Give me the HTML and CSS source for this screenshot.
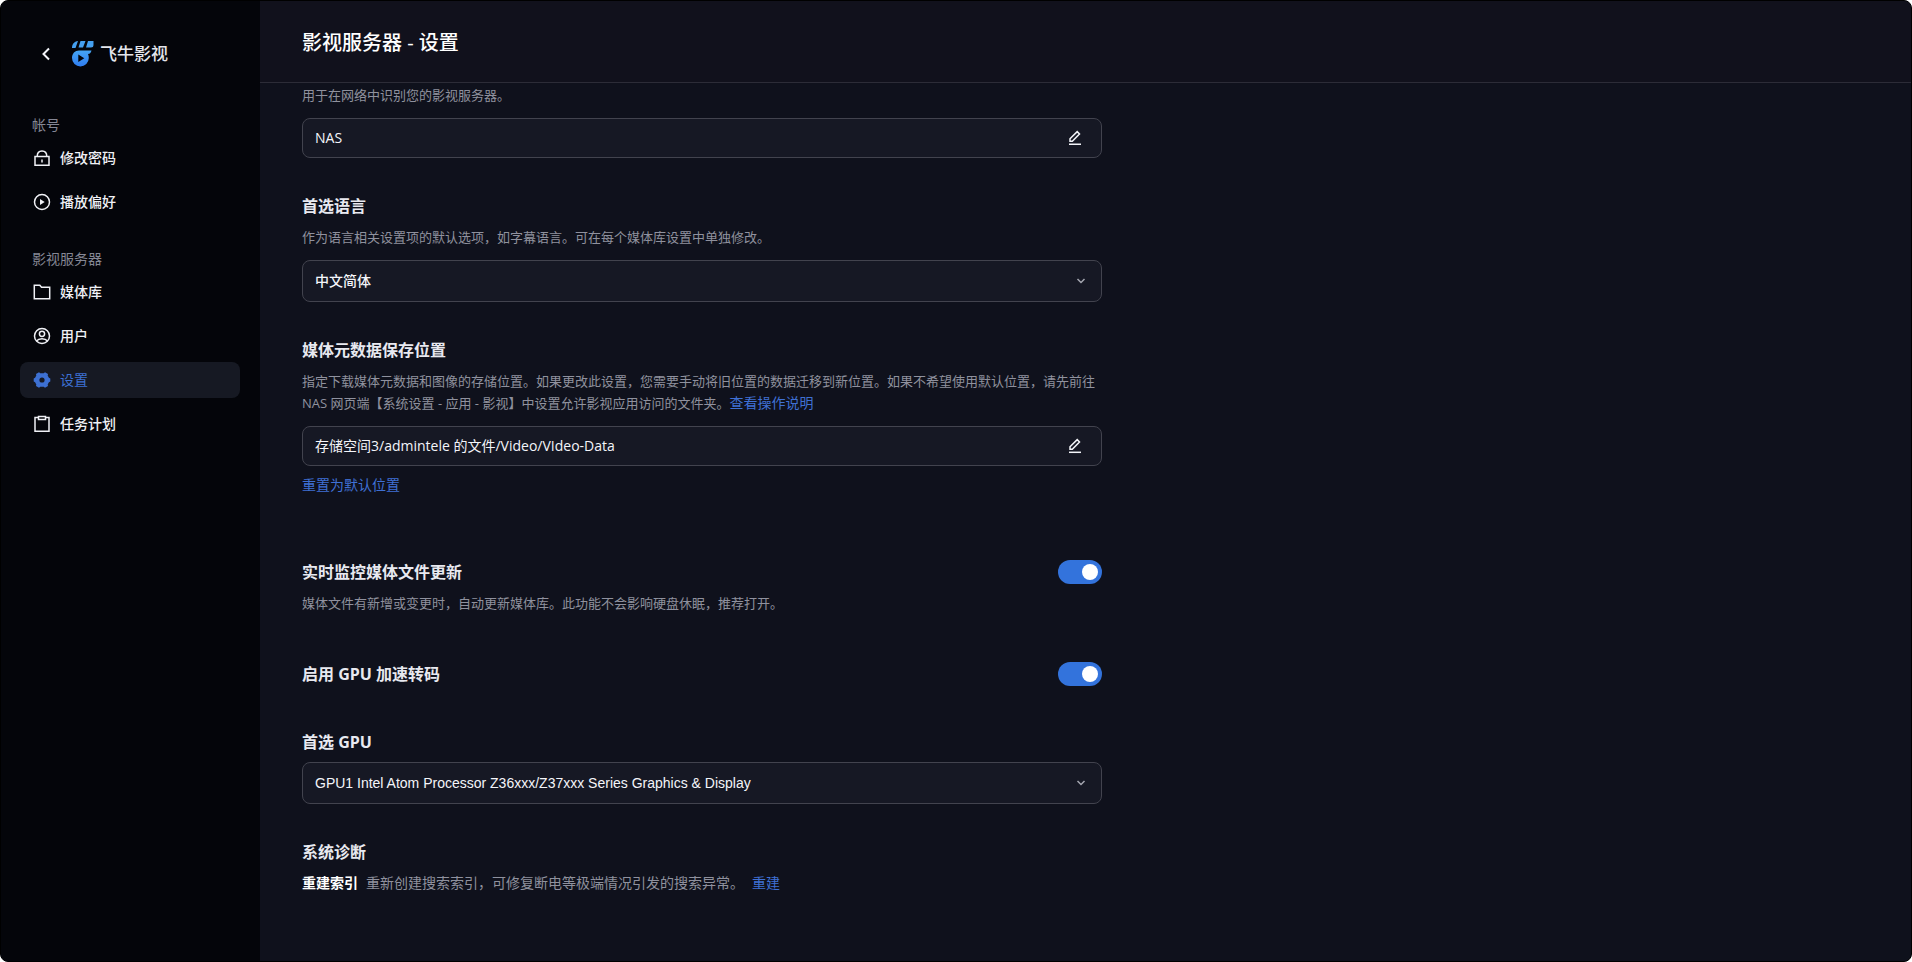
FILE: index.html
```html
<!DOCTYPE html>
<html lang="zh-CN">
<head>
<meta charset="utf-8">
<title>影视服务器 - 设置</title>
<link rel="stylesheet" href="styles.css">
</head>
<body>
<div class="window">
  <aside class="sidebar">
    <div class="brand">
      <button class="back" type="button" aria-label="返回">
        <svg width="20" height="20" viewBox="0 0 20 20" fill="none" stroke="currentColor" stroke-width="2"><path d="M13 4.500 7.500 10l5.500 5.500"/></svg>
      </button>
      <svg class="logo" width="24" height="28" viewBox="0 0 24 28" aria-hidden="true">
        <defs><linearGradient id="brandBlue" x1="0" y1="0" x2="0" y2="1"><stop offset="0" stop-color="#45a5f5"/><stop offset="1" stop-color="#2f7df0"/></linearGradient></defs>
        <path fill="#45a0f0" d="M1 8c0-4 2-6.500 6-7L4.500 8zM9.500 1h5L12 7.500H7.500zM17 1h5.500v4c0 1.700-1 2.500-2.500 2.500h-5z"/>
        <path fill="url(#brandBlue)" fill-rule="evenodd" d="M8 10.500h12.500c-.4 2-1.500 3.300-3.500 3.600.5 1.200.8 2.400.8 3.900A8.400 8.400 0 1 1 1 18c0-4.500 3-7.500 7-7.500zM7.300 14.500v7.500l6-3.800z"/>
      </svg>
      <span class="brand-name">飞牛影视</span>
    </div>
    <nav class="nav">
      <section class="nav-group">
        <h2 class="nav-label">帐号</h2>
        <a class="nav-item" href="#password">
          <svg class="icon" viewBox="0 0 20 20"><path d="M3 8.500h14v8.700H3zM5.200 8.500C5.200 5 7 2.900 10 2.900s4.800 2.100 4.800 5.600M10 11.500v3"/></svg>修改密码</a>
        <a class="nav-item" href="#playback">
          <svg class="icon" viewBox="0 0 20 20"><circle cx="10" cy="10" r="7.500"/><path class="solid" d="M8 7v6l4.700-3z"/></svg>播放偏好</a>
      </section>
      <section class="nav-group">
        <h2 class="nav-label">影视服务器</h2>
        <a class="nav-item" href="#library">
          <svg class="icon" viewBox="0 0 20 20"><path d="M2.300 3.300h5.500l1.700 2h8.200v11.400H2.300z"/></svg>媒体库</a>
        <a class="nav-item" href="#users">
          <svg class="icon" viewBox="0 0 20 20"><circle cx="10" cy="10" r="7.500"/><circle cx="10" cy="7.800" r="2.600"/><path d="M4.500 15c1.200-1.600 3-2.300 5.500-2.300s4.300.7 5.500 2.300"/></svg>用户</a>
        <a class="nav-item active" href="#settings" aria-current="page">
          <svg class="icon" viewBox="0 0 20 20"><path class="solid" fill-rule="evenodd" d="M7 2.200l1.300 1.100h3.400L13 2.200l3 1.700-.3 1.700 1.200 2.200 1.400.7v3l-1.400.7-1.200 2.200.3 1.700-3 1.700-1.300-1.100H8.300L7 17.800l-3-1.700.3-1.700-1.200-2.200-1.400-.7v-3l1.400-.7 1.200-2.200L4 3.900zM10 7.400a2.600 2.600 0 1 0 0 5.200 2.600 2.600 0 0 0 0-5.200z"/></svg>设置</a>
        <a class="nav-item" href="#tasks">
          <svg class="icon" viewBox="0 0 20 20"><path d="M6.500 3.500H3v13.700h14V3.500h-3.500M6.500 2.500h7v3h-7z"/></svg>任务计划</a>
      </section>
    </nav>
  </aside>

  <main class="main">
    <header class="header"><h1 class="title">影视服务器 - 设置</h1></header>
    <form class="settings">
      <section class="setting">
        <label class="desc" for="name">用于在网络中识别您的影视服务器。</label>
        <div class="field">
          <input class="field-input" id="name" type="text" value="NAS">
          <button class="edit" type="button" aria-label="编辑名称">
            <svg width="16" height="16" viewBox="0 0 16 16" fill="none" stroke="currentColor" stroke-width="1.500"><path d="M3 11.300V8.800l7.200-7.200 2.300 2.300-7.200 7.400z"/><path d="M2 14.300h12"/></svg>
          </button>
        </div>
      </section>

      <section class="setting">
        <label class="heading" for="language">首选语言</label>
        <p class="desc">作为语言相关设置项的默认选项，如字幕语言。可在每个媒体库设置中单独修改。</p>
        <div class="picker">
          <select class="picker-select" id="language"><option>中文简体</option></select>
          <svg class="chevron" viewBox="0 0 12 12"><path d="M2.500 4 6 7.500 9.500 4"/></svg>
        </div>
      </section>

      <section class="setting">
        <label class="heading" for="location">媒体元数据保存位置</label>
        <p class="desc">指定下载媒体元数据和图像的存储位置。如果更改此设置，您需要手动将旧位置的数据迁移到新位置。如果不希望使用默认位置，请先前往 NAS 网页端【系统设置 - 应用 - 影视】中设置允许影视应用访问的文件夹。<a class="link" href="#help">查看操作说明</a></p>
        <div class="field">
          <input class="field-input" id="location" type="text" value="存储空间3/admintele 的文件/Video/VIdeo-Data">
          <button class="edit" type="button" aria-label="编辑位置">
            <svg width="16" height="16" viewBox="0 0 16 16" fill="none" stroke="currentColor" stroke-width="1.500"><path d="M3 11.300V8.800l7.200-7.200 2.300 2.300-7.200 7.400z"/><path d="M2 14.300h12"/></svg>
          </button>
        </div>
        <a class="link reset" href="#reset">重置为默认位置</a>
      </section>

      <section class="setting monitor">
        <div class="switch-row">
          <label class="heading" for="watch">实时监控媒体文件更新</label>
          <input class="switch" id="watch" type="checkbox" role="switch" checked>
        </div>
        <p class="desc">媒体文件有新增或变更时，自动更新媒体库。此功能不会影响硬盘休眠，推荐打开。</p>
      </section>

      <section class="setting transcode">
        <div class="switch-row">
          <label class="heading" for="gpu-on">启用 GPU 加速转码</label>
          <input class="switch" id="gpu-on" type="checkbox" role="switch" checked>
        </div>
      </section>

      <section class="setting gpu">
        <label class="heading" for="gpu">首选 GPU</label>
        <div class="picker">
          <select class="picker-select" id="gpu"><option>GPU1 Intel Atom Processor Z36xxx/Z37xxx Series Graphics &amp; Display</option></select>
          <svg class="chevron" viewBox="0 0 12 12"><path d="M2.500 4 6 7.500 9.500 4"/></svg>
        </div>
      </section>

      <section class="setting">
        <h2 class="heading">系统诊断</h2>
        <div class="action-row">
          <strong class="action-name">重建索引</strong>
          <span class="action-desc">重新创建搜索索引，可修复断电等极端情况引发的搜索异常。</span>
          <a class="link" href="#rebuild">重建</a>
        </div>
      </section>
    </form>
  </main>
</div>
</body>
</html>
```

FILE: styles.css
```css
* {
  box-sizing: border-box;
}

body,
h1,
h2,
p {
  margin: 0;
}

body {
  background: #fff;
  color: #f4f5fa;
  font: 14px/22px "Open Sans", "Noto Sans CJK SC", sans-serif;
}

button,
input,
select {
  font: inherit;
  color: inherit;
}

.window {
  display: flex;
  min-height: 100vh;
  overflow: hidden;
  border: 1px solid #000;
  border-radius: 8px;
  background: #0f111c;
}

/* Sidebar */

.sidebar {
  flex: none;
  width: 259px;
  padding: 38px 20px 20px 19px;
  background: #04050a;
}

.brand {
  display: flex;
  align-items: center;
  height: 30px;
  padding-left: 16px;
}

.back {
  display: flex;
  padding: 0;
  border: 0;
  background: none;
}

.logo {
  margin-left: 15px;
}

.brand-name {
  margin-left: 5px;
  font-size: 17px;
  font-weight: 500;
  color: #e4e6ec;
}

.nav {
  display: grid;
  gap: 28px;
  margin-top: 45px;
}

.nav-group {
  display: grid;
  gap: 8px;
}

.nav-label {
  margin-bottom: -4px;
  padding-left: 12px;
  font-size: 14px;
  font-weight: 400;
  color: #858794;
}

.nav-item {
  display: flex;
  align-items: center;
  gap: 8px;
  height: 36px;
  padding-left: 12px;
  border-radius: 8px;
  font-weight: 500;
  color: #f0f1f6;
  text-decoration: none;
}

.nav-item.active {
  background: #161923;
  color: #3d70d2;
  font-weight: 400;
}

.icon {
  width: 20px;
  height: 20px;
  fill: none;
  stroke: currentColor;
  stroke-width: 1.5;
}

.solid {
  fill: currentColor;
  stroke: none;
}

/* Main */

.main {
  flex: 1;
  min-width: 0;
}

.header {
  display: flex;
  align-items: center;
  height: 82px;
  padding: 2px 42px 0;
  border-bottom: 1px solid #2c2c37;
  background: #11111c;
}

.title {
  font-size: 20px;
  line-height: 28px;
  font-weight: 500;
  color: #fff;
}

.settings {
  display: grid;
  gap: 36px;
  max-width: 884px;
  padding: 1px 42px 60px;
}

.setting {
  display: grid;
}

.heading {
  font-size: 16px;
  line-height: 24px;
  font-weight: 700;
  color: #e8e9f0;
}

.desc {
  font-size: 13px;
  color: #8f919e;
}

.heading + .desc,
.switch-row + .desc,
.heading + .picker,
.heading + .action-row {
  margin-top: 8px;
}

.link {
  display: inline-block;
  font-size: 14px;
  color: #3f70d4;
  text-decoration: none;
  vertical-align: top;
}

.field,
.picker {
  border: 1px solid #42434e;
  border-radius: 8px;
  background: #161824;
}

.desc + .field,
.desc + .picker {
  margin-top: 12px;
}

.field {
  display: flex;
  align-items: center;
  height: 40px;
  padding: 0 18px 0 12px;
}

.field-input {
  flex: 1;
  min-width: 0;
  padding: 0;
  border: 0;
  outline: 0;
  background: none;
}

.edit {
  display: flex;
  padding: 0;
  border: 0;
  background: none;
}

.picker {
  display: grid;
  align-items: center;
  height: 42px;
}

.picker-select,
.chevron {
  grid-area: 1 / 1;
}

.picker-select {
  appearance: none;
  height: 40px;
  padding: 0 40px 0 12px;
  border: 0;
  border-radius: 8px;
  background: none;
  font-family: "Liberation Sans", "Noto Sans CJK SC", sans-serif;
  font-weight: 500;
}

.chevron {
  justify-self: end;
  width: 12px;
  height: 12px;
  margin-right: 14px;
  fill: none;
  stroke: #a4a6b0;
  stroke-width: 1.5;
  pointer-events: none;
}

.reset {
  justify-self: start;
  margin-top: 8px;
}

.monitor {
  margin-top: 28px;
}

.transcode {
  margin-top: 12px;
}

.gpu {
  margin-top: 8px;
}

.switch-row {
  display: flex;
  align-items: center;
  justify-content: space-between;
}

.switch {
  appearance: none;
  display: flex;
  align-items: center;
  width: 44px;
  height: 24px;
  margin: 0;
  padding: 0 4px;
  border-radius: 12px;
  background: #3a3c48;
}

.switch::before {
  content: "";
  width: 16px;
  height: 16px;
  border-radius: 50%;
  background: #fff;
}

.switch:checked {
  justify-content: flex-end;
  background: #3373dc;
}

.action-row {
  display: flex;
  gap: 8px;
}

.action-name {
  font-weight: 700;
  color: #fff;
}

.action-desc {
  color: #8f919e;
}
```
